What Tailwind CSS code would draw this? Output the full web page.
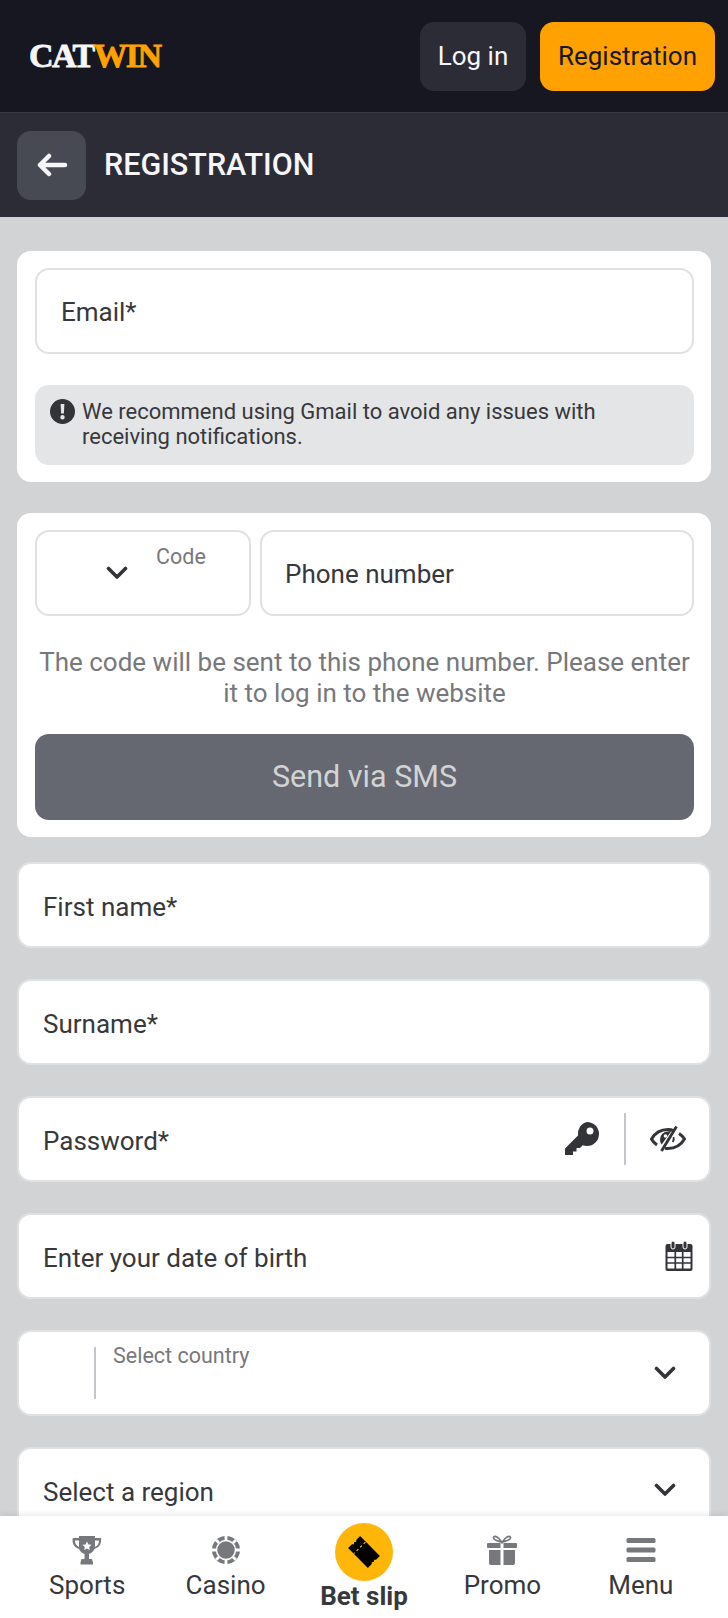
<!DOCTYPE html>
<html lang="en">
<head>
  <meta charset="UTF-8" />
  <meta name="viewport" content="width=device-width, initial-scale=1.0" />
  <title>Registration</title>
  <script src="https://cdn.jsdelivr.net/npm/@tailwindcss/browser@4"></script>
</head>
<body class="relative h-[1618px] overflow-hidden bg-[#d2d3d5] font-['Roboto',sans-serif] text-[#37383c]">

  <!-- Top bar -->
  <header class="flex h-[112px] items-center justify-between bg-[#161720] pl-[29px] pr-[13px]">
    <div class="flex font-['Liberation_Serif',serif] text-[34px] leading-none font-bold tracking-[-1.6px] [-webkit-text-stroke:0.8px_currentColor]">
      <span class="text-[#f6f6f8]">CAT</span><span class="text-[#ffa100]">WIN</span>
    </div>
    <div class="flex gap-[14px]">
      <button class="h-[69px] w-[106px] rounded-[14px] bg-[#2b2c35] text-[26px] text-[#f6f6f8]">Log in</button>
      <button class="h-[69px] w-[175px] rounded-[14px] bg-[#ffa100] text-[26px] text-[#161720]">Registration</button>
    </div>
  </header>

  <!-- Page title -->
  <div class="flex h-[105px] items-center gap-[18px] border-t border-[#383942] bg-[#2b2c35] pl-[17px]">
    <button class="flex h-[69px] w-[69px] items-center justify-center rounded-[14px] bg-[#484a53]">
      <svg width="32" height="24" viewBox="0 0 32 24" fill="none" stroke="#f6f6f8" stroke-width="4.5" stroke-linecap="round" stroke-linejoin="round"><path d="M29 12H4M13 3l-9 9 9 9"/></svg>
    </button>
    <h1 class="text-[30.5px] font-medium text-[#f6f6f8]">REGISTRATION</h1>
  </div>

  <main class="flex flex-col px-[17px] pt-[34px]">
    <!-- Email -->
    <section class="rounded-[14px] bg-white py-[17px] pl-[18px] pr-[17px]">
      <div class="flex h-[86px] items-center rounded-[14px] border-2 border-[#e0e1e3] px-[24px] pt-[3px] text-[26px]">Email*</div>
      <div class="mt-[31px] flex h-[80px] gap-[7px] rounded-[14px] bg-[#e4e5e7] pl-[15px] pt-[14px] text-[22px] leading-[25px]">
        <svg class="shrink-0" width="25" height="25" viewBox="0 0 25 25"><circle cx="12.5" cy="12.5" r="12.5" fill="#333438"/><path d="M10.600 5h3.800l-.5 9.500h-2.800zM12.500 16a2.200 2.200 0 1 1 0 4.400 2.200 2.200 0 0 1 0-4.400z" fill="#e4e5e7"/></svg>
        <p class="w-[560px]">We recommend using Gmail to avoid any issues with receiving notifications.</p>
      </div>
    </section>

    <!-- Phone -->
    <section class="mt-[31px] rounded-[14px] bg-white py-[17px] pl-[18px] pr-[17px]">
      <div class="flex gap-[9px]">
        <div class="relative h-[86px] w-[216px] rounded-[14px] border-2 border-[#e0e1e3]">
          <span class="absolute left-[119px] top-[9px] text-[21.5px] text-[#77787c]">Code</span>
          <svg class="absolute left-[69px] top-[34px]" width="22" height="14" viewBox="0 0 22 14" fill="none" stroke="#333438" stroke-width="3.600" stroke-linecap="round" stroke-linejoin="round"><path d="M2.500 2.500 11 11l8.500-8.500"/></svg>
        </div>
        <div class="flex h-[86px] flex-1 items-center rounded-[14px] border-2 border-[#e0e1e3] pl-[23px] pr-[24px] pt-[3px] text-[26px]">Phone number</div>
      </div>
      <p class="mx-auto mt-[31px] w-[655px] text-center text-[26px] leading-[31px] text-[#77787c]">The code will be sent to this phone number. Please enter it to log in to the website</p>
      <button class="mt-[25px] h-[86px] w-full rounded-[14px] bg-[#656870] text-[30.5px] text-[#d2d3d5]">Send via SMS</button>
    </section>

    <!-- Fields -->
    <div class="mt-[25px] flex h-[86px] items-center rounded-[14px] border-2 border-[#e0e1e3] bg-white px-[24px] pt-[4px] text-[26px]">First name*</div>
    <div class="mt-[31px] flex h-[86px] items-center rounded-[14px] border-2 border-[#e0e1e3] bg-white px-[24px] pt-[4px] text-[26px]">Surname*</div>

    <div class="mt-[31px] flex h-[86px] items-center rounded-[14px] border-2 border-[#e0e1e3] bg-white pl-[24px] text-[26px]">
      <span class="flex-1 pt-[4px]">Password*</span>
      <svg width="36" height="36" viewBox="0 0 36 36" fill="#333438"><path d="M23 1a12 12 0 0 1 0 24c-1.500 0-3-.3-4.300-.8l-2.700 2.800h-3.500v3.500H9V34H1v-6.500l13-13A12 12 0 0 1 23 1zm3 5.500a3.500 3.500 0 1 0 0 7 3.500 3.500 0 0 0 0-7z"/></svg>
      <div class="ml-[24px] h-[52px] w-[2px] bg-[#c3c7cc]"></div>
      <svg class="ml-[24px] mr-[23px]" width="36" height="30" viewBox="0 0 36 30" fill="none" stroke="#333438" stroke-width="3"><path d="M24 6.800C22 5.900 20 5.500 18 5.500 11 5.500 5 9 1.500 15c1.300 2.500 3.300 4.500 5.500 6M29 9.500c2.300 1.500 4.200 3.300 5.500 5.500-3.500 6-9.500 9.500-16.500 9.500-1 0-2-.1-3-.3"/><path d="M11.500 27 26.500 2.500" stroke-width="2.800"/><path d="M18 7.500a8 8 0 0 0-8 8c0 1.900.6 3.600 1.700 5l10-14z" fill="#333438" stroke="none"/><path d="M23.500 13c.6 1.700.3 3.500-.8 5" stroke-width="1.800"/><circle cx="15.500" cy="12" r="1.800" fill="#fff" stroke="none"/></svg>
    </div>

    <div class="mt-[31px] flex h-[86px] items-center justify-between rounded-[14px] border-2 border-[#e0e1e3] bg-white pl-[24px] pr-[16px] text-[26px]">
      <span class="pt-[4px]">Enter your date of birth</span>
      <svg width="28" height="30" viewBox="0 0 28 30"><rect x="0.500" y="3" width="27" height="27" rx="2" fill="#333438"/><rect x="6" y="0" width="4" height="8" rx="2" fill="#333438" stroke="#fff"/><rect x="18" y="0" width="4" height="8" rx="2" fill="#333438" stroke="#fff"/><path d="M2.500 11h23v16.500h-23z" fill="#fff"/><path d="M10.300 10v18M17.700 10v18M2 16.500h24M2 22h24" stroke="#333438" stroke-width="1.700"/></svg>
    </div>

    <div class="relative mt-[31px] h-[86px] rounded-[14px] border-2 border-[#e0e1e3] bg-white">
      <div class="absolute left-[75px] top-[15px] h-[52px] w-[2px] bg-[#c3c7cc]"></div>
      <span class="absolute left-[94px] top-[8px] text-[21.5px] text-[#77787c]">Select country</span>
      <svg class="absolute right-[33px] top-[34px]" width="22" height="14" viewBox="0 0 22 14" fill="none" stroke="#333438" stroke-width="3.600" stroke-linecap="round" stroke-linejoin="round"><path d="M2.500 2.500 11 11l8.500-8.500"/></svg>
    </div>

    <div class="mt-[31px] flex h-[86px] items-center justify-between rounded-[14px] border-2 border-[#e0e1e3] bg-white pl-[24px] pr-[33px] text-[26px]">
      <span class="pt-[4px]">Select a region</span>
      <svg width="22" height="14" viewBox="0 0 22 14" fill="none" stroke="#333438" stroke-width="3.600" stroke-linecap="round" stroke-linejoin="round"><path d="M2.500 2.500 11 11l8.500-8.500"/></svg>
    </div>
  </main>

  <!-- Bottom nav -->
  <nav class="absolute inset-x-0 bottom-0 grid h-[102px] grid-cols-5 bg-white px-[18px] text-center text-[26px] leading-[30px] shadow-[0_-2px_6px_rgba(0,0,0,0.08)]">
    <a class="flex flex-col items-center pt-[19px]">
      <svg width="30" height="30" viewBox="0 0 30 30" fill="#77787c"><path fill-rule="evenodd" d="M7 1h16v2h6c.6 4-.5 9-6.500 11-1 2.500-3.500 4.500-5.500 5v5h3l1 3.500v2H8.500v-2l1-3.500h3v-5c-2-.5-4.500-2.500-5.500-5C1 12 0 7 .8 3H7zM3 5.500c0 3 1 5 4 6.500V5.500zm24 0h-4V12c3-1.500 4-3.500 4-6.500z"/><path d="m15 6.500 1.400 2.900 3.100.4-2.300 2.200.6 3.100-2.800-1.500-2.800 1.500.6-3.100-2.300-2.200 3.100-.4z" fill="#fff"/></svg>
      <span class="mt-[5px]">Sports</span>
    </a>
    <a class="flex flex-col items-center pt-[19px]">
      <svg width="30" height="30" viewBox="0 0 30 30"><circle cx="15" cy="15" r="14" fill="#77787c"/><circle cx="15" cy="15" r="9.500" fill="none" stroke="#fff" stroke-width="1.500"/><circle cx="15" cy="15" r="6.500" fill="#77787c"/><path d="M15 1v4M15 25v4M1 15h4M25 15h4M5 5l3 3M22 22l3 3M25 5l-3 3M8 22l-3 3" stroke="#fff" stroke-width="2.800" stroke-dasharray="4 100"/></svg>
      <span class="mt-[5px]">Casino</span>
    </a>
    <a class="flex flex-col items-center pt-[7px]">
      <span class="flex h-[58px] w-[58px] items-center justify-center rounded-full bg-[#ffb609]">
        <svg width="36" height="36" viewBox="0 0 36 36"><g transform="rotate(45 18 18)"><path d="M4 9.500h28v5.500l-1.500 1.500 1.500 1.500 -1.500 1.500 1.500 1.500v5.500H4V21l1.500-1.500L4 18l1.500-1.500L4 15z" fill="#000"/><path d="M12 10v16" stroke="#ffb609" stroke-width="1.200" stroke-dasharray="2.500 2.500"/></g></svg>
      </span>
      <span class="text-[26px] font-bold leading-[30px]">Bet slip</span>
    </a>
    <a class="flex flex-col items-center pt-[19px]">
      <svg width="30" height="30" viewBox="0 0 30 30" fill="#77787c"><path d="M1 8h12.500v5H1a1 1 0 0 1-1-1V9a1 1 0 0 1 1-1zm15.500 0H29a1 1 0 0 1 1 1v3a1 1 0 0 1-1 1H16.500zM2 15h11.500v15H4a2 2 0 0 1-2-2zm14.500 0H28v13a2 2 0 0 1-2 2h-9.500z"/><path d="M14.500 7C11 6 6 5 6.500 2.500 7.500 0 12 2 14.500 7zM15.500 7C19 6 24 5 23.500 2.500 22.500 0 18 2 15.500 7z" fill="none" stroke="#77787c" stroke-width="1.800"/></svg>
      <span class="mt-[5px]">Promo</span>
    </a>
    <a class="flex flex-col items-center pt-[19px]">
      <svg width="30" height="30" viewBox="0 0 30 30" fill="#77787c"><rect x="0.500" y="3" width="29" height="5" rx="1.500"/><rect x="0.500" y="12.500" width="29" height="5" rx="1.500"/><rect x="0.500" y="22" width="29" height="5" rx="1.500"/></svg>
      <span class="mt-[5px]">Menu</span>
    </a>
  </nav>
</body>
</html>
